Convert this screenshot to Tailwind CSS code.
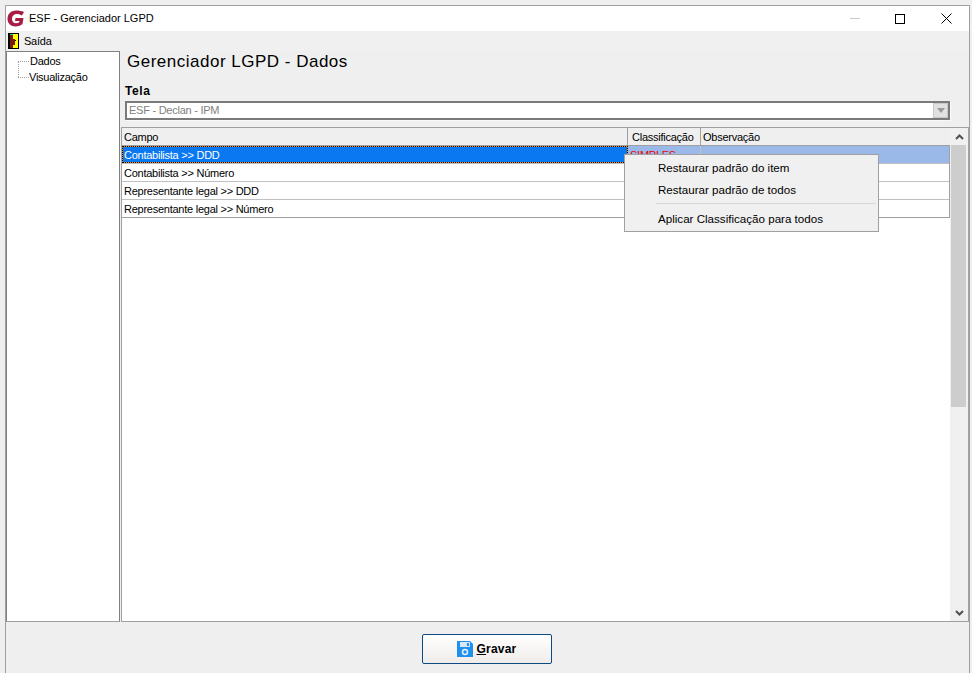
<!DOCTYPE html>
<html lang="en">
<head>
<meta charset="UTF-8">
<title>ESF - Gerenciador LGPD</title>
<script src="https://cdn.jsdelivr.net/npm/@tailwindcss/browser@4"></script>
</head>
<body class="bg-[#efefef] font-['Liberation_Sans',sans-serif] text-[11px] tracking-[-0.25px] text-black">
<div class="w-[972px] h-[673px] overflow-hidden pt-[5px] pl-[5px] pr-[2px]">
  <div class="relative h-[668px] border-l border-t border-r border-[#a0a0a0] flex flex-col">
    <!-- title bar -->
    <div class="h-[25px] bg-white flex items-center shrink-0">
      <svg class="ml-[1px] w-[18px] h-[17px]" viewBox="0 0 18 17"><path d="M9 .5C4 .5.5 4 .5 9c0 4.500 3.500 7.500 8 7.500 3 0 5.500-1 7-2.500l1-6H8.500L8 11h4.500l-.5 1.500c-1 .6-2 .8-3 .8-2.500 0-4-1.800-4-4.300C5 6 7 4 10 4c1.800 0 3.500.6 5 1.500L17 2C15 1 12 .5 9 .5z" fill="#a81c44"/></svg>
      <span class="ml-[4px] tracking-normal">ESF - Gerenciador LGPD</span>
      <div class="ml-auto flex items-center">
        <div class="w-[46px] flex justify-center"><div class="w-[10px] h-px bg-[#c8c8c8]"></div></div>
        <div class="w-[45px] flex justify-center pr-[2px]"><div class="w-[10px] h-[10px] border border-black"></div></div>
        <div class="w-[46px] flex justify-center"><svg class="w-[11px] h-[11px]" viewBox="0 0 11 11"><path d="M.5.5l10 10M10.500.5l-10 10" stroke="#000" fill="none"/></svg></div>
      </div>
    </div>
    <!-- menu -->
    <div class="h-[20px] flex items-center shrink-0 bg-[#f0f0f0]">
      <svg class="ml-[2px] w-[11px] h-[16px]" viewBox="0 0 11 16"><rect width="11" height="16" fill="#000"/><rect x="3" y="1" width="7" height="14" fill="#ffff00"/><rect x="2" y="1" width="3" height="1" fill="#18c8c8"/><path d="M2 2h3v13H2z" fill="#7a1a10"/><rect x="5" y="6" width="2" height="6" fill="#7a1a10"/><rect x="7" y="7" width="1" height="1" fill="#000"/></svg>
      <span class="ml-[5px]">Saída</span>
    </div>
    <!-- body -->
    <div class="flex-1 flex min-h-0">
      <div class="w-[114px] shrink-0 bg-white border border-[#808080] border-b-[#a0a0a0] pt-px">
        <div class="relative h-[16px] flex items-center pl-[11px]"><span class="w-[11px] border-t border-dotted border-[#a0a0a0]"></span><span class="ml-px">Dados</span></div>
        <div class="relative h-[16px] flex items-center pl-[11px]"><span class="absolute left-[11px] top-[-8px] h-[16px] border-l border-dotted border-[#a0a0a0]"></span><span class="w-[11px] border-t border-dotted border-[#a0a0a0]"></span><span>Visualização</span></div>
      </div>
      <div class="flex-1 min-w-0 flex flex-col pl-px">
        <h1 class="mt-[-4px] ml-[6px] h-[30px] leading-[30px] text-[17px] tracking-[.5px]">Gerenciador LGPD - Dados</h1>
        <div class="mt-[6px] ml-[4px] h-[16px] leading-[16px] font-bold text-[12px] tracking-[.6px]">Tela</div>
        <div class="mt-[2px] ml-[4px] mr-[19px] h-[19px] bg-white border-2 border-[#7a7a7a] shadow-[1px_1px_0_#fafafa] flex items-center">
          <span class="ml-[2px] text-[#808080]">ESF - Declan - IPM</span>
          <div class="ml-auto w-[15px] h-[15px] bg-[#e1e1e1] border border-[#c8c8c8] flex items-center justify-center"><div class="w-0 h-0 border-l-[4px] border-r-[4px] border-t-[5px] border-l-transparent border-r-transparent border-t-[#9a9a9a]"></div></div>
        </div>
        <!-- grid -->
        <div class="mt-[7px] flex-1 min-h-0 bg-white border border-[#a0a0a0] flex">
          <div class="flex-1 min-w-0">
            <div class="h-[18px] bg-[#efefef] flex border-b border-[#a0a0a0] leading-[19px]">
              <div class="w-[506px] pl-[2px] border-r border-[#a0a0a0]">Campo</div>
              <div class="w-[73px] pl-[4px] border-r border-[#a0a0a0]">Classificação</div>
              <div class="flex-1 pl-[2px]">Observação</div>
            </div>
            <div class="border-r border-[#a0a0a0]">
              <div class="h-[18px] flex bg-[#9ab8e8] border-b border-[#c0c0c0] leading-[19px]">
                <div class="w-[506px] pl-[2px] bg-[#0a78f0] text-white border border-[#ff9000] outline-dotted outline-1 -outline-offset-1 outline-black leading-[17px] pl-px">Contabilista &gt;&gt; DDD</div>
                <div class="w-[73px] pl-[2px] text-[#f00000] border-r border-[#c0c0c0]">SIMPLES</div>
                <div class="flex-1"></div>
              </div>
              <div class="h-[18px] pl-[2px] border-b border-[#c0c0c0] leading-[19px]">Contabilista &gt;&gt; Número</div>
              <div class="h-[18px] pl-[2px] border-b border-[#c0c0c0] leading-[19px]">Representante legal &gt;&gt; DDD</div>
              <div class="h-[18px] pl-[2px] border-b border-[#a0a0a0] leading-[19px]">Representante legal &gt;&gt; Número</div>
            </div>
          </div>
          <!-- scrollbar -->
          <div class="w-[18px] shrink-0 bg-[#f0f0f0] flex flex-col">
            <div class="h-[17px] flex items-center justify-center"><svg class="w-[9px] h-[6px]" viewBox="0 0 9 6"><path d="M1 5l3.500-3.500L8 5" fill="none" stroke="#505050" stroke-width="2"/></svg></div>
            <div class="h-[262px] bg-[#cdcdcd] mx-[1px] w-[15px]"></div>
            <div class="mt-auto h-[17px] flex items-center justify-center"><svg class="w-[9px] h-[6px]" viewBox="0 0 9 6"><path d="M1 1l3.500 3.500L8 1" fill="none" stroke="#505050" stroke-width="2"/></svg></div>
          </div>
        </div>
      </div>
    </div>
    <!-- footer -->
    <div class="h-[51px] shrink-0 flex justify-center pt-[12px] pr-[2px] bg-[#efefef]">
      <button class="w-[130px] h-[30px] rounded-[2px] border-[1.5px] border-[#0b4a82] bg-gradient-to-b from-white to-[#f0ece9] flex items-center justify-center font-bold text-[12px] tracking-[.2px]">
        <svg class="w-[16px] h-[16px]" viewBox="0 0 16 16"><path d="M0 0h13l3 3v13H0z" fill="#1e90f0"/><rect x="3" y="1" width="10" height="5" fill="#d8e8f8"/><rect x="10" y="2" width="2" height="3" fill="#1e90f0"/><circle cx="8" cy="11" r="2.500" fill="none" stroke="#e8f2fc" stroke-width="1.500"/></svg>
        <span class="ml-[4px]"><u>G</u>ravar</span>
      </button>
    </div>
    <!-- context menu -->
    <div class="absolute left-[618px] top-[148px] w-[255px] h-[78px] bg-[#f0f0f0] border border-[#a0a0a0] pt-[2px] text-[11.6px] tracking-normal">
      <div class="h-[22px] leading-[22px] pl-[33px]">Restaurar padrão do item</div>
      <div class="h-[22px] leading-[22px] pl-[33px]">Restaurar padrão de todos</div>
      <div class="h-px bg-[#d7d7d7] ml-[31px] mr-[2px] mt-[2px] mb-[4px]"></div>
      <div class="h-[22px] leading-[22px] pl-[33px]">Aplicar Classificação para todos</div>
    </div>
  </div>
</div>
</body>
</html>
